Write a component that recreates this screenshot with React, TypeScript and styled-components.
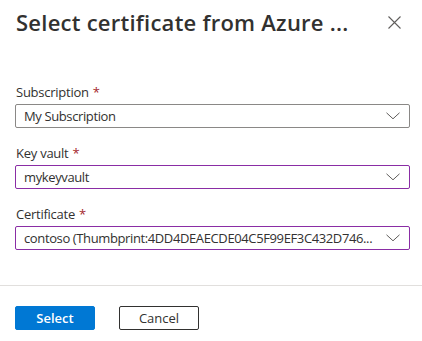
import styled, { createGlobalStyle } from "styled-components";

const GlobalStyle = createGlobalStyle`
  html, body {
    margin: 0;
    padding: 0;
    background: #ffffff;
  }
  body {
    font-family: "Open Sans", "Noto Sans", sans-serif;
    color: #323130;
  }
`;

const Panel = styled.div`
  width: 422px;
  height: 341px;
  display: flex;
  flex-direction: column;
  background: #fff;
  overflow: hidden;
`;

const Header = styled.div`
  display: flex;
  align-items: center;
  justify-content: space-between;
  padding: 8px 18px 0 16px;
  height: 28px;
`;

const Title = styled.h1`
  margin: 0;
  font-size: 22px;
  line-height: 28px;
  font-weight: 600;
  color: #323130;
  letter-spacing: 0.25px;
  white-space: nowrap;
`;

const CloseButton = styled.button`
  border: 0;
  background: transparent;
  padding: 0;
  width: 20px;
  height: 20px;
  display: flex;
  align-items: center;
  justify-content: center;
  color: #605e5c;
  cursor: pointer;
`;

const Form = styled.div`
  display: flex;
  flex-direction: column;
  padding: 46px 12px 0 15px;
  gap: 15px;
`;

const Group = styled.div`
  display: flex;
  flex-direction: column;
  gap: 2px;
`;

const Label = styled.label`
  font-size: 13px;
  line-height: 20px;
  padding-left: 1px;
  letter-spacing: -0.25px;
  color: #323130;
`;

const Required = styled.span`
  color: #a4262c;
  margin-left: 4px;
`;

const Dropdown = styled.div<{ $focused?: boolean }>`
  height: 24px;
  box-sizing: border-box;
  border: 1px solid ${(p) => (p.$focused ? "#8a2da5" : "#8a8886")};
  border-radius: 2px;
  display: flex;
  align-items: center;
  padding: 0 9px 0 8px;
  gap: 8px;
`;

const Value = styled.span`
  flex: 1;
  font-size: 13px;
  line-height: 20px;
  letter-spacing: -0.38px;
  white-space: nowrap;
  overflow: hidden;
  color: #323130;
`;

const Divider = styled.div`
  height: 1px;
  background: #e1dfdd;
  margin-top: 35px;
`;

const Footer = styled.div`
  display: flex;
  gap: 24px;
  padding: 20px 15px 0;
`;

const Button = styled.button<{ $primary?: boolean }>`
  width: 80px;
  height: 24px;
  box-sizing: border-box;
  border-radius: 2px;
  font-family: "Open Sans", "Noto Sans", sans-serif;
  font-size: 13px;
  font-weight: ${(p) => (p.$primary ? 600 : 400)};
  padding: 0;
  cursor: pointer;
  border: 1px solid ${(p) => (p.$primary ? "#0078d4" : "#323130")};
  background: ${(p) => (p.$primary ? "#0078d4" : "#ffffff")};
  color: ${(p) => (p.$primary ? "#ffffff" : "#323130")};
`;

const Chevron = () => (
  <svg width="14" height="8" viewBox="0 0 14 8" fill="none">
    <path d="M0.5 0.8 L7 6.8 L13.5 0.8" stroke="#605e5c" strokeWidth="1" />
  </svg>
);

const fields = [
  { label: "Subscription", value: "My Subscription", focused: false },
  { label: "Key vault", value: "mykeyvault", focused: true },
  {
    label: "Certificate",
    value: "contoso (Thumbprint:4DD4DEAECDE04C5F99EF3C432D746...",
    focused: true,
  },
];

export default function App() {
  return (
    <Panel>
      <GlobalStyle />
      <Header>
        <Title>Select certificate from Azure ...</Title>
        <CloseButton aria-label="Close">
          <svg width="13" height="13" viewBox="0 0 13 13" fill="none">
            <path d="M0.5 0.5 L12.5 12.5 M12.5 0.5 L0.5 12.5" stroke="#605e5c" strokeWidth="1.1" />
          </svg>
        </CloseButton>
      </Header>
      <Form>
        {fields.map((f) => (
          <Group key={f.label}>
            <Label>
              {f.label}
              <Required>*</Required>
            </Label>
            <Dropdown $focused={f.focused}>
              <Value>{f.value}</Value>
              <Chevron />
            </Dropdown>
          </Group>
        ))}
      </Form>
      <Divider />
      <Footer>
        <Button $primary>Select</Button>
        <Button>Cancel</Button>
      </Footer>
    </Panel>
  );
}
